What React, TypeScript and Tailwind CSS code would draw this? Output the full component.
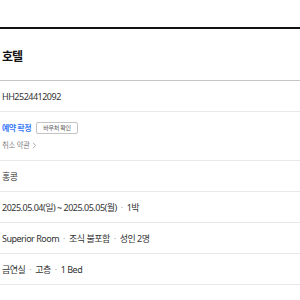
import React from 'react'

const Dot = () => <span className="mx-[4px] text-[#b5b5b5]">·</span>

function Row({ children }: { children: React.ReactNode }) {
    return (
        <div className="h-[31px] flex items-center pl-[2px] border-b border-[#e8e8e8] text-[9px] text-[#333] tracking-[-0.5px] leading-none">
            {children}
        </div>
    )
}

export default function App() {
    return (
        <div className="w-[300px] h-[300px] bg-white overflow-hidden" style={{ fontFamily: '"Noto Sans", "Noto Sans CJK KR", sans-serif' }}>
            <div className="h-[29px] border-b-2 border-[#111]" />
            <div className="h-[52px] flex items-center pt-[4px] pl-[2px] border-b border-[#c4c4c4]">
                <h1 className="text-[12px] font-bold text-[#111] leading-none tracking-[-1px]">호텔</h1>
            </div>
            <Row>HH2524412092</Row>
            <div className="h-[49px] flex flex-col justify-center pl-[2px] border-b border-[#e8e8e8]">
                <div className="h-[12px] flex items-center gap-[5px]">
                    <span className="text-[8px] font-bold text-[#3a7bf5] tracking-[-0.5px] leading-none">예약 확정</span>
                    <span className="h-[12px] w-[42px] flex items-center justify-center border border-[#c4c4c4] rounded-[2px] text-[6px] text-[#555] tracking-[-0.3px] leading-none">바우처 확인</span>
                </div>
                <div className="mt-[7px] h-[10px] flex items-center text-[7.5px] text-[#888] tracking-[-0.4px] leading-none">
                    취소 약관
                    <svg width="5" height="7" viewBox="0 0 5 7" className="ml-[2px]">
                        <path d="M1 0.8l2.6 2.7-2.6 2.7" fill="none" stroke="#999" strokeWidth="0.8" />
                    </svg>
                </div>
            </div>
            <Row>홍콩</Row>
            <Row>
                2025.05.04(일) ~ 2025.05.05(월)
                <Dot />
                1박
            </Row>
            <Row>
                Superior Room
                <Dot />
                조식 불포함
                <Dot />
                성인 2명
            </Row>
            <Row>
                금연실
                <Dot />
                고층
                <Dot />
                1 Bed
            </Row>
        </div>
    )
}
